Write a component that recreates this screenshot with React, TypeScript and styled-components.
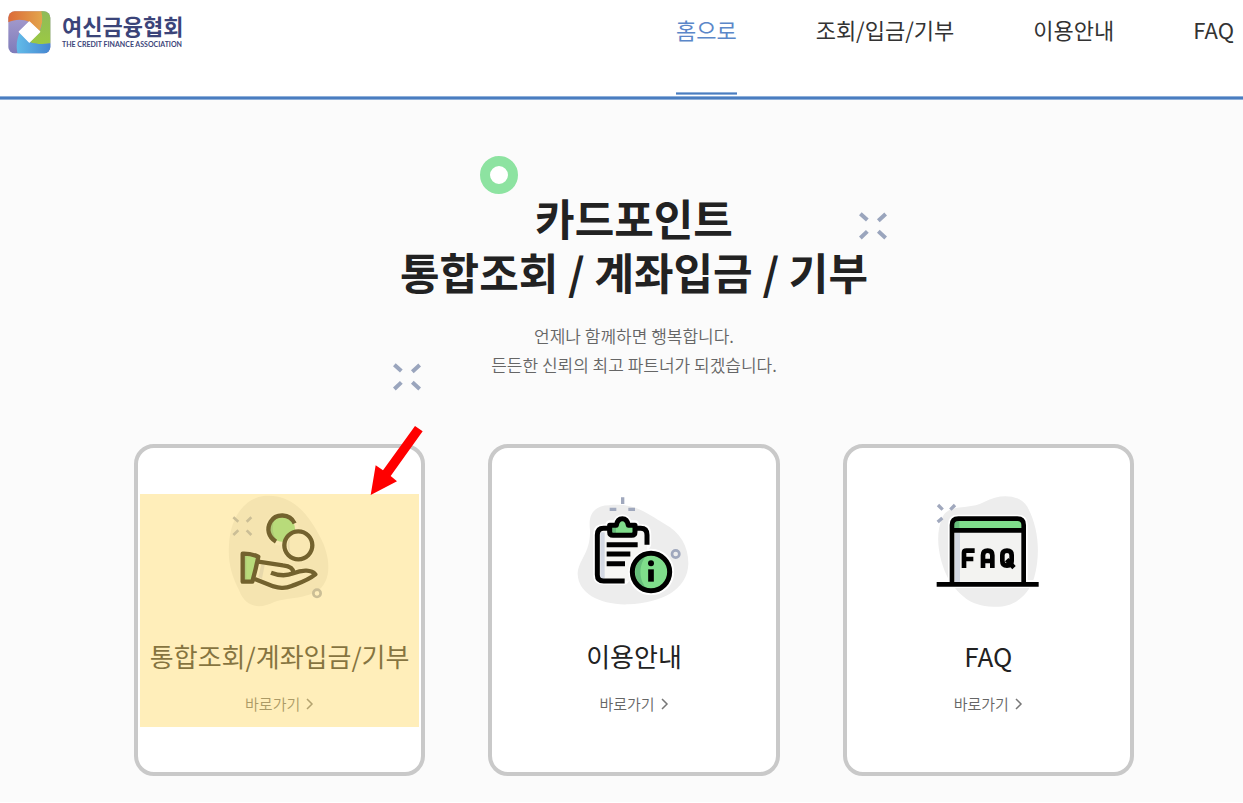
import React from "react";
import styled, { createGlobalStyle } from "styled-components";

const GlobalStyle = createGlobalStyle`
  *, *::before, *::after { box-sizing: border-box; }
  body {
    margin: 0;
    background: #fff;
    color: #222;
    font-family: "Noto Sans CJK KR", "Noto Sans", sans-serif;
  }
  a { color: inherit; text-decoration: none; }
`;

const Header = styled.header`
  display: flex;
  justify-content: space-between;
  height: 96px;
  padding: 0 9px 0 8px;
`;

const Brand = styled.a`
  display: flex;
  align-items: flex-start;
  gap: 11px;
  padding-top: 11px;
  color: #3b4479;
`;

const BrandText = styled.span`
  display: flex;
  flex-direction: column;
`;

const BrandName = styled.strong`
  font-size: 22px;
  line-height: 28px;
  font-weight: 700;
`;

const BrandSub = styled.span`
  font-family: Lato, sans-serif;
  font-size: 7px;
  line-height: 10px;
  font-weight: 700;
`;

const Nav = styled.nav`
  display: flex;
  gap: 79px;
`;

const NavLink = styled.a<{ $active?: boolean }>`
  display: flex;
  flex-direction: column;
  justify-content: space-between;
  height: 95px;
  padding-top: 14px;
  font-size: 22px;
  line-height: 30px;
  white-space: nowrap;
  color: ${(p) => (p.$active ? "#5b87c9" : "#333")};
  &::after {
    content: "";
    height: 3px;
    background: ${(p) => (p.$active ? "#4a7dc0" : "transparent")};
    border-block: 1px solid ${(p) => (p.$active ? "#8fb0da" : "transparent")};
  }
`;

const Rule = styled.div`
  height: 4px;
  background: #4a7dc0;
  border-block: 1px solid #8fb0da;
`;

const Hero = styled.main`
  padding: 90px 0 26px 25px;
  background: #fbfbfb;
`;

const Content = styled.div`
  max-width: 1000px;
  margin: 0 auto;
`;

const Intro = styled.section`
  position: relative;
  text-align: center;
`;

const Title = styled.h1`
  margin: 0;
  font-size: 43px;
  line-height: 54px;
  font-weight: 700;
`;

const Lead = styled.p`
  margin: 23px 0 0;
  font-size: 17px;
  line-height: 29px;
  font-weight: 350;
  color: #666;
`;

const Decoration = styled.svg<{ $x: number; $y: number }>`
  position: absolute;
  left: calc(50% + ${(p) => p.$x}px);
  top: ${(p) => p.$y}px;
`;

const Cards = styled.section`
  display: grid;
  grid-template-columns: repeat(3, 1fr);
  gap: 63px;
  margin-top: 65px;
`;

const Card = styled.article`
  position: relative;
  display: flex;
  flex-direction: column;
  align-items: center;
  padding: 42px 0 57px;
  background: #fff;
  border: 4px solid #c9c9c9;
  border-radius: 20px;
`;

const CardTitle = styled.h2`
  margin: 27px 0 0;
  font-size: 26px;
  line-height: 38px;
  font-weight: 400;
  white-space: nowrap;
`;

const CardLink = styled.a`
  display: flex;
  align-items: center;
  gap: 6px;
  margin-top: 18px;
  font-size: 15px;
  line-height: 22px;
  font-weight: 350;
  color: #666;
`;

const Highlight = styled.div`
  position: absolute;
  inset: 46px 2px 45px;
  background: rgba(255, 217, 102, 0.45);
  pointer-events: none;
`;

const Pointer = styled.svg`
  position: absolute;
  top: -23px;
  right: -3px;
`;

const Logo = () => (
  <svg width="43" height="43" viewBox="0 0 129 129" aria-hidden="true">
    <defs>
      <clipPath id="logoClip"><rect x="1" y="1" width="126" height="126" rx="19" /></clipPath>
      <linearGradient id="lo" x1="0" y1="0" x2="1" y2="0"><stop offset="0" stopColor="#dc6a38" /><stop offset="1" stopColor="#e3a64c" /></linearGradient>
      <linearGradient id="lg" x1="0" y1="0" x2="0" y2="1"><stop offset="0" stopColor="#8fba5a" /><stop offset="1" stopColor="#9bc943" /></linearGradient>
      <linearGradient id="lb" x1="0" y1="0" x2="1" y2="0"><stop offset="0" stopColor="#62bce9" /><stop offset="1" stopColor="#4585d0" /></linearGradient>
      <linearGradient id="lp" x1="0" y1="0" x2="0" y2="1"><stop offset="0" stopColor="#a99fd0" /><stop offset="1" stopColor="#7e7bb9" /></linearGradient>
    </defs>
    <g clipPath="url(#logoClip)">
      <rect width="129" height="129" fill="url(#lp)" />
      <path d="M0 0H104C106 26 102 44 93 62L64 33C46 24 22 24 0 34Z" fill="url(#lo)" />
      <path d="M100 0H129V97C105 101 82 100 64 93L95 62C103 43 105 22 100 0Z" fill="url(#lg)" />
      <path d="M129 97V129H29C23 104 27 83 35 65L64 93C82 100 106 101 129 97Z" fill="url(#lb)" />
      <path d="M64 33L95 62L64 93L34 62Z" fill="#fff" stroke="#fff" strokeWidth="4" strokeLinejoin="round" />
    </g>
  </svg>
);

const Spark = ({ x, y }: { x: number; y: number }) => (
  <Decoration $x={x} $y={y} width="28" height="28" viewBox="0 0 84 84" aria-hidden="true">
    <path d="M4 5L25 24M80 6L58 26M4 78L25 58M58 58L80 78" stroke="#9aa5bd" strokeWidth="12" fill="none" />
  </Decoration>
);

const HandIcon = () => (
  <svg width="120" height="120" viewBox="15 15 360 360" aria-hidden="true">
    <path d="M145 33C235 25 280 90 315 155C338 196 350 255 330 292C305 345 220 335 178 351C130 375 90 365 72 315C52 275 38 235 42 180C46 100 85 42 145 33Z" fill="#ededed" />
    <path d="M55 97L70 110M109 97L95 110M55 150L70 136M95 136L109 150" stroke="#a0a8bd" strokeWidth="8" fill="none" />
    <circle cx="306" cy="325" r="11" fill="none" stroke="#a0a8bd" strokeWidth="8" />
    <g fill="#f4f4f4" stroke="#f4f4f4" strokeWidth="19" strokeLinejoin="round">
      <path d="M83 206L130 213L124 284L112 290H83Z" />
      <path d="M129 230L205 242C226 244 237 252 236 264C258 257 282 254 302 268L230 303C207 314 190 308 172 303L119 283Z" />
      <circle cx="200" cy="132" r="41" /><circle cx="250" cy="181" r="42" />
    </g>
    <path d="M129 230L205 242C226 244 237 252 236 264C258 257 282 254 302 268L230 303C207 314 190 308 172 303L119 283Z" fill="#f4f4f2" />
    <path d="M83 206L130 213L112 290H83Z" fill="#7fdd8b" />
    <path d="M84 206H94V290H84Z" fill="#6cbd85" />
    <circle cx="202" cy="132" r="38" fill="#7fdd8b" />
    <path d="M181 99C159 118 161 149 184 165C171 144 170 119 181 99Z" fill="#6cbd85" />
    <circle cx="250" cy="181" r="42" fill="#f4f4f2" />
    <path d="M226 157C215 172 216 192 228 207C222 190 222 174 226 157ZM139 238L149 240L141 281L130 276Z" fill="#d3d8e3" />
    <g fill="none" stroke="#000" strokeWidth="13">
      <path d="M239 115C224 84 182 85 167 110C154 132 160 156 183 170" />
      <circle cx="250" cy="181" r="42" />
      <path d="M83 206Q106 205 130 215Q123 251 112 290H83Z" strokeLinejoin="round" />
      <path d="M130 230L204 241C224 243 235 250 236 264M168 263C193 273 215 273 235 265C264 253 290 255 301 268C279 286 253 294 230 303C207 313 190 308 172 303L119 282" strokeLinejoin="round" />
    </g>
  </svg>
);

const GuideIcon = () => (
  <svg width="120" height="120" viewBox="27 15 360 360" aria-hidden="true">
    <path d="M75 135C68 85 90 62 132 61C210 52 250 88 298 116C348 143 371 187 370 237C367 315 290 354 190 358C105 361 40 325 38 268C39 224 77 207 75 135Z" fill="#ededed" />
    <path d="M173 37V57M134 73H154M190 73H210" stroke="#a0a8bd" strokeWidth="10" />
    <circle cx="332" cy="207" r="11" fill="none" stroke="#a0a8bd" strokeWidth="8" />
    <g fill="#fff" stroke="#fff" strokeWidth="25" strokeLinejoin="round">
      <path d="M97 144Q97 130 113 130H232Q246 130 246 144V178L178 287H115Q97 287 97 272Z" />
      <path d="M134 118H154Q160 101 172 101Q184 101 190 118H210V150H134Z" />
      <circle cx="258" cy="261" r="57" />
    </g>
    <path d="M97 144Q97 130 113 130H232Q246 130 246 144V240L190 287H115Q97 287 97 272Z" fill="#f6f6f4" />
    <path d="M106 142H119V281H106Z" fill="#d3d8e3" />
    <path d="M134 121H154Q160 101 172 101Q184 101 190 121H210V150H134Z" fill="#7fdd8b" />
    <path d="M141 122H153V145H141Z" fill="#66be7b" />
    <circle cx="258" cy="261" r="68" fill="#fff" />
    <circle cx="258" cy="261" r="56" fill="#7fdd8b" />
    <path d="M247 209C199 227 198 291 248 314C220 286 219 237 247 209Z" fill="#66be7b" />
    <g fill="none" stroke="#000" strokeWidth="15">
      <path d="M136 130H116Q97 130 97 150V269Q97 288 116 288H179M209 130H227Q246 130 246 150V179" />
      <path d="M134 121H154Q157 101 172 101Q187 101 190 121H210V141Q210 151 200 151H144Q134 151 134 141Z" strokeLinejoin="round" />
      <path d="M125 179H218M125 207H196M125 236H180" />
      <circle cx="258" cy="261" r="56" />
      <path d="M258 253V290" strokeWidth="17" />
    </g>
    <circle cx="258" cy="235" r="9" />
  </svg>
);

const FaqIcon = () => (
  <svg width="120" height="120" viewBox="25 15 360 360" aria-hidden="true">
    <path d="M67 100C85 52 150 77 195 50C240 25 300 27 323 65C358 130 363 210 343 280C320 345 270 369 220 365C150 363 120 330 88 285C62 238 42 160 67 100Z" fill="#ededed" />
    <path d="M55 60L69 74M106 60L92 74M54 111L68 99" stroke="#a0a8bd" strokeWidth="10" />
    <path d="M97 290V118Q97 101 115 101H294Q312 101 312 118V290ZM52 297H356" fill="#fff" stroke="#fff" strokeWidth="24" strokeLinejoin="round" />
    <path d="M97 290V118Q97 101 115 101H294Q312 101 312 118V290Z" fill="#f3f3f1" />
    <path d="M103 136V118Q104 106 118 106H293Q306 106 306 118V136Z" fill="#7fdd8b" />
    <path d="M105 108H119V130H105Z" fill="#66be7b" />
    <path d="M106 143H121V291H106Z" fill="#d3d8e3" />
    <g fill="none" stroke="#000" strokeWidth="14">
      <path d="M97 297V120Q97 101 116 101H293Q312 101 312 120V297M97 136H312M51 298H357" />
      <path d="M133 249V203Q133 197 140 197H165M133 222H161" />
      <path d="M190 249V211Q190 197 204 197Q218 197 218 211V249M190 228H218" />
      <path d="M248 210Q248 197 262 197Q276 197 276 210V228Q276 242 262 242Q248 242 248 228ZM261 224L283 248" />
    </g>
  </svg>
);

const navItems = ["홈으로", "조회/입금/기부", "이용안내", "FAQ"];

const services = [
  { title: "통합조회/계좌입금/기부", Icon: HandIcon, highlighted: true },
  { title: "이용안내", Icon: GuideIcon, highlighted: false },
  { title: "FAQ", Icon: FaqIcon, highlighted: false },
];

export default function App() {
  return (
    <>
      <GlobalStyle />
      <Header>
        <Brand href="#">
          <Logo />
          <BrandText>
            <BrandName>여신금융협회</BrandName>
            <BrandSub>THE CREDIT FINANCE ASSOCIATION</BrandSub>
          </BrandText>
        </Brand>
        <Nav>
          {navItems.map((label, i) => (
            <NavLink key={label} href="#" $active={i === 0}>{label}</NavLink>
          ))}
        </Nav>
      </Header>
      <Rule />
      <Hero>
        <Content>
          <Intro>
            <Decoration $x={-155} $y={-35} width="40" height="40" viewBox="0 0 40 40" aria-hidden="true">
              <circle cx="20" cy="20" r="14" fill="#fff" stroke="#8de3a1" strokeWidth="10" />
            </Decoration>
            <Spark x={225} y={22} />
            <Spark x={-241} y={173} />
            <Title>카드포인트<br />통합조회 / 계좌입금 / 기부</Title>
            <Lead>언제나 함께하면 행복합니다.<br />든든한 신뢰의 최고 파트너가 되겠습니다.</Lead>
          </Intro>
          <Cards>
            {services.map(({ title, Icon, highlighted }) => (
              <Card key={title}>
                <Icon />
                <CardTitle>{title}</CardTitle>
                <CardLink href="#">
                  바로가기
                  <svg width="8" height="12" viewBox="0 0 8 12" aria-hidden="true">
                    <path d="M1 1L6 6L1 11" fill="none" stroke="#777" strokeWidth="1.5" />
                  </svg>
                </CardLink>
                {highlighted && (
                  <>
                    <Highlight />
                    <Pointer width="54" height="72" viewBox="735 15 162 216" aria-hidden="true">
                      <path d="M737 225L752 136L774 151L870 18L893 34L797 168L816 184Z" fill="#f00" />
                    </Pointer>
                  </>
                )}
              </Card>
            ))}
          </Cards>
        </Content>
      </Hero>
    </>
  );
}
